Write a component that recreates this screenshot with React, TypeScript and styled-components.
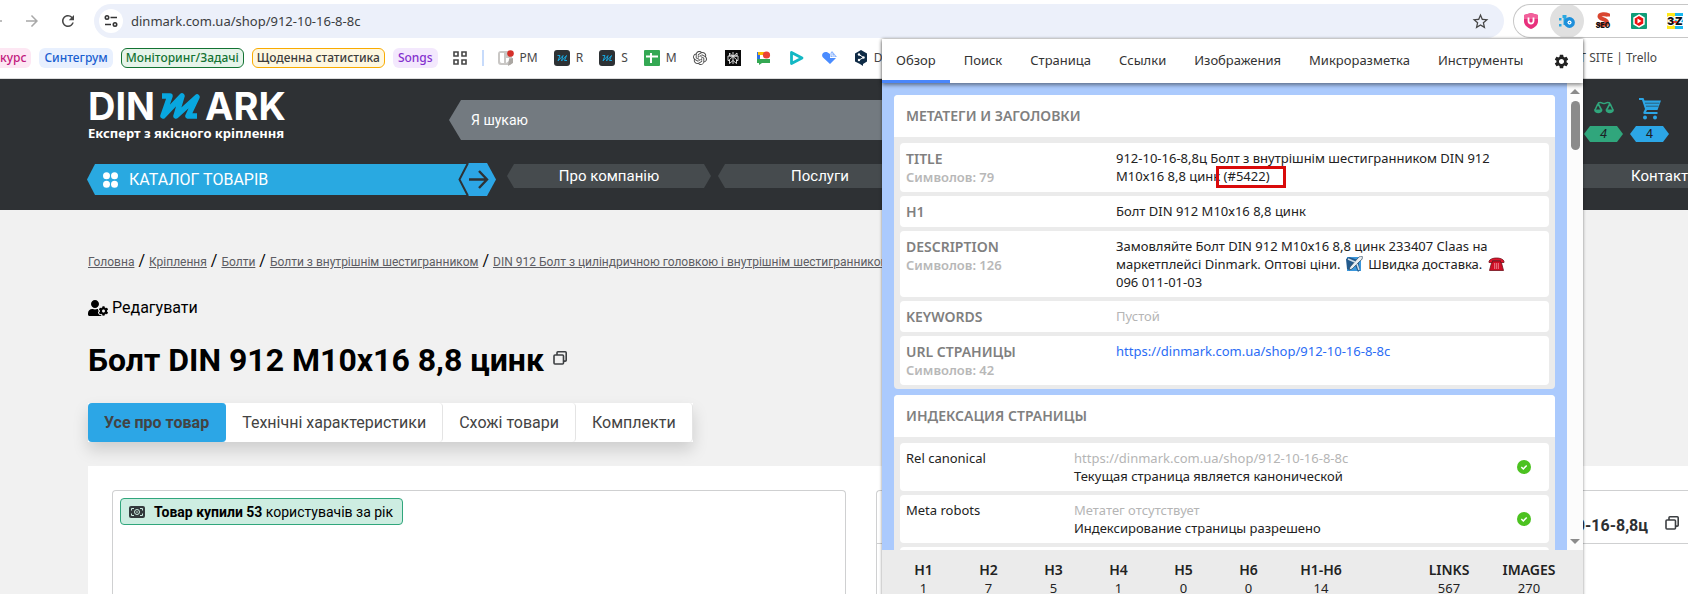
import React from 'react';
import styled, { createGlobalStyle, css } from 'styled-components';
import { MdArrowBack, MdArrowForward, MdRefresh, MdSettings, MdStarBorder } from 'react-icons/md';
import { SiOpenai } from 'react-icons/si';
import { FaUserCog } from 'react-icons/fa';

const ui = '"Noto Sans", "Open Sans", sans-serif';
const site = 'Roboto, "Liberation Sans", sans-serif';
const dark = '#2e3134';
const blue = '#2ca6e6';

const GlobalStyle = createGlobalStyle`
  *, *::before, *::after { box-sizing: border-box; }
  body { margin: 0; background: #f1f1f1; }
  button, input { font: inherit; color: inherit; border: 0; padding: 0; margin: 0; background: none; }
  h1, h2, p, dl, dt, dd, ol, ul { margin: 0; padding: 0; font-weight: inherit; list-style: none; }
  a { color: inherit; text-decoration: none; }
  svg { display: block; flex: none; }
`;

const Page = styled.div`
  position: relative;
  display: flex;
  flex-direction: column;
  min-height: 100vh;
  overflow: hidden;
  font-family: ${site};
  color: #000;
`;

/* ---------- browser chrome ---------- */

const Toolbar = styled.div`
  display: flex;
  align-items: center;
  height: 38px;
  padding-top: 4px;
  background: #fff;
  font-family: ${ui};
`;

const NavButtons = styled.div`
  display: flex;
  margin: 0 8px 0 -22px;
`;

const NavButton = styled.button<{ $muted?: boolean }>`
  display: grid;
  place-items: center;
  width: 36px;
  height: 34px;
  color: ${(p) => (p.$muted ? '#a8a8a8' : '#474747')};
`;

const Omnibox = styled.div`
  display: flex;
  flex: 1;
  align-items: center;
  gap: 8px;
  height: 34px;
  padding: 0 5px;
  border-radius: 17px;
  background: #ecf0fa;
`;

const SiteInfo = styled.button`
  display: grid;
  place-items: center;
  width: 24px;
  height: 24px;
  border-radius: 50%;
  background: #fff;
`;

const Address = styled.input`
  flex: 1;
  min-width: 0;
  font-size: 13px;
  color: #3a3c40;
  outline: none;
`;

const StarButton = styled.button`
  width: 24px;
  height: 24px;
  display: grid;
  place-items: center;
  margin-right: 7px;
  color: #474747;
`;

const Extensions = styled.div`
  display: flex;
  width: 175px;
  height: 34px;
  margin-left: 9px;
  border: 1px solid #c7c7c7;
  border-right: 0;
  border-radius: 17px 0 0 17px;
  overflow: hidden;
`;

const Extension = styled.button<{ $active?: boolean }>`
  display: grid;
  flex: none;
  place-items: center;
  width: 34px;
  height: 34px;
  margin: -1px 2px 0 0;
  border-radius: 50%;
  background: ${(p) => (p.$active ? '#e0e0e0' : 'none')};
`;

const Bookmarks = styled.nav`
  display: flex;
  align-items: flex-start;
  height: 41px;
  padding-top: 10px;
  overflow: hidden;
  border-bottom: 1px solid #dcdcdc;
  background: #fff;
  font: 12px/20px ${ui};
  color: #474747;
  white-space: nowrap;
`;

const Chips = styled.div`
  display: flex;
  gap: 8px;
  margin-left: -5px;
`;

const tones = {
  pink: css`background: #fde7f3; color: #c2187d;`,
  blue: css`background: #e8f0fe; color: #1a5fd0;`,
  green: css`background: #e6f4ea; color: #137333; border-color: #137333;`,
  yellow: css`background: #fef7e0; color: #3c3c3c; border-color: #f9ab00;`,
  purple: css`background: #f3e8fd; color: #8430ce;`,
};

const Chip = styled.a<{ $tone: keyof typeof tones }>`
  height: 20px;
  padding: 0 4px;
  border: 1px solid transparent;
  border-radius: 6px;
  line-height: 18px;
  font-weight: 500;
  ${(p) => tones[p.$tone]}
`;

const AppsButton = styled.button`
  display: grid;
  place-items: center;
  width: 14px;
  height: 20px;
  margin-left: 15px;
`;

const Divider = styled.span`
  width: 2px;
  height: 16px;
  margin: 2px 14px 0 15px;
  background: #c7dbfb;
`;

const BookmarkLinks = styled.div`
  display: flex;
  flex: 1;
  gap: 16px;
`;

const Bookmark = styled.a`
  display: flex;
  align-items: center;
  gap: 6px;
  min-width: 16px;
  height: 20px;
  &:last-child { margin: 0 31px 0 auto; }
`;

/* ---------- shop page ---------- */

const Header = styled.header`
  display: flex;
  flex-direction: column;
  gap: 21px;
  padding: 14px 0 15px 87px;
  background: ${dark};
  color: #fff;
`;

const HeaderTop = styled.div`
  display: flex;
  height: 50px;
`;

const Logo = styled.a`
  width: 362px;
  padding-left: 1px;
`;

const LogoWord = styled.span`
  display: flex;
  gap: 4px;
  height: 27px;
  font: 700 38px/27px Inter, "Liberation Sans", sans-serif;
`;

const Tagline = styled.span`
  display: block;
  padding-top: 4px;
  font: 700 13px/18px ${ui};
`;

const Search = styled.form`
  flex: 1;
  height: 40px;
  margin-top: 7px;
  padding: 0 22px;
  background: #737a80;
  clip-path: polygon(12px 0, calc(100% - 12px) 0, 100% 50%, calc(100% - 12px) 100%, 12px 100%, 0 50%);
`;

const SearchInput = styled.input`
  width: 100%;
  height: 40px;
  font-size: 14px;
  outline: none;
  &::placeholder { color: #fff; opacity: 1; }
`;

const Counters = styled.div`
  display: flex;
  gap: 7px;
  margin: 5px 19px 0 60px;
`;

const Counter = styled.a`
  display: flex;
  flex-direction: column;
  align-items: center;
  gap: 6px;
  width: 39px;
`;

const CounterBadge = styled.span<{ $color: string; $italic?: boolean }>`
  width: 39px;
  background: ${(p) => p.$color};
  color: #1c2226;
  clip-path: polygon(6px 0, 33px 0, 100% 50%, 33px 100%, 6px 100%, 0 50%);
  font: ${(p) => (p.$italic ? 'italic' : 'normal')} 13px/16px ${site};
  text-align: center;
`;

const HeaderNav = styled.div`
  display: flex;
  align-items: flex-start;
  gap: 11px;
`;

const Catalog = styled.button`
  position: relative;
  display: flex;
  flex: none;
  align-items: center;
  width: 409px;
  height: 31px;
  padding-left: 16px;
  color: #fff;
  font-size: 16px;
  &::before {
    content: '';
    position: absolute;
    inset: 0 20px 0 0;
    background: #29a9e1;
    clip-path: polygon(8px 0, 100% 0, 100% 100%, 8px 100%, 0 50%);
  }
`;

const CatalogLabel = styled.span`
  position: relative;
  display: flex;
  align-items: center;
  gap: 11px;
`;

const CatalogArrow = styled.span`
  position: absolute;
  right: 0;
  top: -1px;
`;

const Menu = styled.nav`
  display: flex;
  flex: 1;
  gap: 7px;
  overflow: hidden;
`;

const MenuItem = styled.a`
  flex: 0 0 204px;
  background: #464b4e;
  clip-path: polygon(7px 0, calc(100% - 7px) 0, 100% 50%, calc(100% - 7px) 100%, 7px 100%, 0 50%);
  font-size: 15px;
  line-height: 24px;
  text-align: center;
`;

const Content = styled.main`
  display: flex;
  flex: 1;
  flex-direction: column;
  align-items: flex-start;
  padding: 39px 0 0 88px;
  font-size: 16px;
  line-height: 24px;
`;

const Breadcrumbs = styled.nav`
  white-space: nowrap;
`;

const Crumb = styled.a`
  color: #5d5d63;
  font-size: 12px;
  text-decoration: underline;
`;

const EditLink = styled.a`
  display: flex;
  align-items: center;
  gap: 4px;
  margin-top: 22px;
`;

const TitleRow = styled.div`
  display: flex;
  gap: 9px;
  margin-top: 21px;
`;

const Title = styled.h1`
  font-size: 32px;
  line-height: 38px;
  font-weight: 700;
`;

const CopyButton = styled.button`
  align-self: flex-start;
  padding-top: 10px;
`;

const ProductTabs = styled.div`
  display: flex;
  margin-top: 24px;
  background: #fff;
  box-shadow: 0 8px 16px rgba(0, 0, 0, 0.15);
`;

const ProductTab = styled.button<{ $active?: boolean }>`
  height: 39px;
  padding: 0 16px;
  border-right: 1px solid #e4e4e4;
  border-radius: 4px;
  color: #434343;
  ${(p) => p.$active && css`
    background: ${blue};
    border-color: ${blue};
    font-weight: 700;
  `}
`;

const ProductCard = styled.section`
  display: grid;
  flex: 1;
  grid-template-columns: 734px 1fr;
  gap: 30px;
  align-self: stretch;
  min-height: 128px;
  margin-top: 24px;
  padding: 24px 0 0 24px;
  background: #fff;
`;

const Gallery = styled.div`
  padding: 7px;
  border: 1px solid #cfd0d1;
  border-bottom: 0;
  border-radius: 4px 4px 0 0;
`;

const SoldBadge = styled.p`
  display: flex;
  align-items: center;
  gap: 9px;
  width: fit-content;
  height: 27px;
  padding: 0 9px 0 8px;
  border: 1px solid #30a67c;
  border-radius: 4px;
  background: #cdede1;
  font-size: 14px;
`;

const Info = styled.div`
  border: 1px solid #cfd0d1;
  border-width: 1px 0 0 1px;
  border-radius: 4px 0 0 0;
`;

const Sku = styled.div`
  display: flex;
  align-items: flex-start;
  justify-content: flex-end;
  gap: 17px;
  height: 53px;
  padding: 23px 9px 0 0;
  border-bottom: 1px solid #cfd0d1;
  color: #2d3033;
  font-weight: 700;
`;

const SkuCopy = styled(CopyButton)`
  padding-top: 2px;
`;

/* ---------- extension popup ---------- */

const Popup = styled.aside`
  position: absolute;
  top: 39px;
  right: 105px;
  bottom: -16px;
  display: flex;
  flex-direction: column;
  width: 701px;
  background: #fff;
  box-shadow: 0 0 3px rgba(0, 0, 0, 0.45);
  font: 13px/18px ${ui};
  color: #222;
`;

const PopupTabs = styled.div`
  position: relative;
  z-index: 1;
  display: flex;
  height: 44px;
  background: #fff;
  box-shadow: 0 2px 4px rgba(0, 0, 0, 0.45);
`;

const PopupTab = styled.button<{ $active?: boolean }>`
  padding: 0 14px;
  border-bottom: 3px solid ${(p) => (p.$active ? '#4a86fa' : 'transparent')};
  color: #333;
`;

const SettingsButton = styled.button`
  margin: 0 13px 0 auto;
`;

const PopupBody = styled.div`
  display: flex;
  flex: 1;
  min-height: 0;
  overflow: hidden;
`;

const Sections = styled.div`
  display: flex;
  flex: 1;
  flex-direction: column;
  gap: 6px;
  padding: 12px 12px 0;
  background: #abcafd;
`;

const Section = styled.section`
  flex: none;
  border-radius: 4px;
  overflow: hidden;
  background: #ebebeb;
`;

const SectionTitle = styled.h2`
  padding-left: 12px;
  background: #fff;
  color: #808080;
  font-size: 14px;
  font-weight: 600;
  line-height: 42px;
`;

const Rows = styled.dl`
  display: flex;
  flex-direction: column;
  gap: 4px;
  padding: 6px 6px 4px;
`;

const Row = styled.div<{ $label: number }>`
  display: grid;
  grid-template-columns: ${(p) => p.$label}px 1fr auto;
  align-items: start;
  padding: 6px 18px 6px 6px;
  border-radius: 4px;
  background: #fff;
`;

const MetaName = styled.dt`
  color: #808080;
  font-size: 14px;
  font-weight: 600;
  line-height: 19px;
`;

const CharCount = styled.small`
  display: block;
  color: #b8b8b8;
  font-size: 13px;
  line-height: 18px;
`;

const MetaValue = styled.dd`
  max-width: 400px;
`;

const Faint = styled.span`
  display: block;
  color: #b5b5b5;
`;

const PageLink = styled.a`
  color: #2a6cf5;
`;

const Emoji = styled.span`
  display: inline-block;
  height: 16px;
  margin: 0 2px;
  vertical-align: -3px;
`;

const Marked = styled.span`
  position: relative;
  &::after {
    content: '';
    position: absolute;
    inset: -1px -16px -3px -8px;
    border: 3px solid #d90a0a;
  }
`;

const Status = styled.dd`
  align-self: center;
`;

const Scrollbar = styled.div`
  display: flex;
  flex-direction: column;
  align-items: center;
  width: 16px;
  padding: 6px 0;
  background: #fcfcfc;
`;

const Thumb = styled.span`
  width: 9px;
  height: 49px;
  margin: 7px 0 auto;
  border-radius: 5px;
  background: #8b8b8b;
`;

const ScrollArrow = styled.span<{ $down?: boolean }>`
  border: solid transparent;
  border-width: 0 5px;
  ${(p) => (p.$down ? 'border-top: 5px solid #8b8b8b;' : 'border-bottom: 5px solid #8b8b8b;')}
`;

const Totals = styled.dl`
  display: flex;
  height: 60px;
  padding: 11px 14px 0 9px;
  background: #ebebeb;
  text-align: center;
`;

const Total = styled.div<{ $wide?: boolean; $apart?: boolean }>`
  width: ${(p) => (p.$wide ? 80 : 65)}px;
  margin-left: ${(p) => (p.$apart ? 'auto' : 0)};
`;

const TotalName = styled.dt`
  font-size: 14px;
  font-weight: 600;
`;

/* ---------- drawings ---------- */

const SliderIcon = () => (
  <svg width="14" height="14" viewBox="0 0 14 14" fill="none" stroke="#333" strokeWidth="1.6">
    <circle cx="3" cy="3.5" r="1.7" /><path d="M6.500 3.500H13M1 10.500h6" /><circle cx="11" cy="10.500" r="1.700" />
  </svg>
);

const ShieldIcon = () => (
  <svg width="16" height="16" viewBox="0 0 16 16">
    <path d="M8 0 15 2v6c0 4-3 6.500-7 8-4-1.500-7-4-7-8V2z" fill="#e8317d" />
    <path d="M8 0 15 2v4H1V2z" fill="#f2609b" />
    <path d="M5.500 4.500v3.500a2.500 2.500 0 0 0 5 0V4.500" fill="none" stroke="#fff" strokeWidth="1.800" />
  </svg>
);

const DotBIcon = () => (
  <svg width="16" height="16" viewBox="0 0 16 16" fill="none">
    <path d="M0 5h2.500v2.500H0zM0 11h2.500v2.500H0z" fill="#2ba8e0" />
    <path d="M3.500 3.500H6V12" stroke="#2ba8e0" strokeWidth="3" />
    <circle cx="10.500" cy="9.500" r="3.600" stroke="#1d8fdb" strokeWidth="3.600" />
    <circle cx="10.500" cy="9.500" r="2" fill="#fff" /><circle cx="10.500" cy="9.500" r=".8" fill="#1d8fdb" />
  </svg>
);

const SeoIcon = () => (
  <svg width="18" height="18" viewBox="0 0 18 18">
    <path d="M14 4.500V3C12 2 5.500 1.500 5.500 4.500S13 7 13 10.500 6 13 4 12" fill="none" stroke="#d9452f" strokeWidth="4" />
    <text x="9" y="16" textAnchor="middle" fontFamily="Inter, sans-serif" fontSize="7" fontWeight="900" fill="#111">SEO</text>
  </svg>
);

const PlayIcon = () => (
  <svg width="16" height="16" viewBox="0 0 16 16">
    <rect width="16" height="16" rx="1" fill="#0f9d78" />
    <path d="M8 2l5 3v6l-5 3-5-3V5z" fill="#e11" stroke="#fff" strokeWidth="1.500" />
    <path d="M6.500 5.500v5L10.500 8z" fill="#fff" />
  </svg>
);

const TwoToneIcon = () => (
  <svg width="16" height="16" viewBox="0 0 16 16" fontFamily="Inter, sans-serif" fontSize="11" fontWeight="900">
    <path d="M0 0h8v16H0z" fill="#ffe81a" /><path d="M8 0h8v16H8z" fill="#18b8f0" />
    <g fill="#111" stroke="#fff" strokeWidth="2" paintOrder="stroke"><text x="0" y="12">3</text><text x="8" y="12">Z</text></g>
    <path d="M6 9h4" stroke="#e11" strokeWidth="1.500" />
  </svg>
);

const AppsIcon = () => (
  <svg width="14" height="14" viewBox="0 0 14 14" fill="none" stroke="#474747" strokeWidth="1.600">
    <path d="M1 1h4v4H1zM9 1h4v4H9zM1 9h4v4H1zM9 9h4v4H9z" />
  </svg>
);

const PmIcon = () => (
  <svg width="16" height="16" viewBox="0 0 16 16">
    <rect y="1" width="14" height="14" rx="3" fill="#c9c7c5" /><path d="M2 3h4v10H4c-2 0-2-1-2-3zM8 8h3v3l-3 2z" fill="#fff" />
    <path d="M11 9l4-1v5l-5 3z" fill="#aaa6a2" /><circle cx="12.500" cy="3.500" r="3.300" fill="#d5302a" />
  </svg>
);

const MIcon = () => (
  <svg width="16" height="16" viewBox="0 0 16 16">
    <rect width="16" height="16" rx="3" fill="#2d3134" />
    <path d="M3.500 5.500h2.500L4 11 9 5.500 7.500 11 12.500 5.500 10.500 10.500H13" fill="none" stroke="#18a5dc" strokeLinejoin="round" />
  </svg>
);

const SheetIcon = () => (
  <svg width="16" height="16" viewBox="0 0 16 16">
    <rect width="16" height="16" rx="1" fill="#34a853" /><path d="M7 3v10M2 6.500h12" stroke="#fff" strokeWidth="2" />
  </svg>
);

const PerplexityIcon = () => (
  <svg width="16" height="16" viewBox="0 0 16 16">
    <rect width="16" height="16" fill="#0b0b0b" />
    <path d="M8 2v12M4.500 3v3H12V3L8 6.500 4.500 3M3 6h10v4.500h-2M5 10.500H3V6M8 6.500l-3.500 3v4L8 10.500l3.500 3v-4z" fill="none" stroke="#e8e8e8" strokeWidth=".9" />
  </svg>
);

const ChatIcon = () => (
  <svg width="14" height="14" viewBox="0 0 14 14">
    <path d="M0 1h3v10H0z" fill="#2f6fe4" /><path d="M1 1h7v3H1z" fill="#fbbc04" />
    <path d="M0 8h13v4H5l-3 2v-2H0z" fill="#34a853" /><circle cx="9.500" cy="4" r="3.600" fill="#ea4335" />
  </svg>
);

const TriangleIcon = () => (
  <svg width="16" height="16" viewBox="0 0 16 16">
    <path d="M2.500 2.500v11L13 8z" fill="none" stroke="#13b8c4" strokeWidth="2.800" strokeLinejoin="round" />
  </svg>
);

const HeartIcon = () => (
  <svg width="17" height="16" viewBox="0 0 17 16">
    <path d="M9 14 2 7.500C-1 4 4-1 9 4v4h6z" fill="#4a8cff" /><path d="M9.500 3 11 1l5 6H9.500z" fill="#8db6ff" />
    <path d="M11 3v3h3" fill="none" stroke="#fff" strokeWidth=".8" />
  </svg>
);

const DeeplIcon = () => (
  <svg width="14" height="16" viewBox="0 0 14 16">
    <path d="M7 0 13 3.500v8L9 14v2l-3-2L1 11.500v-8z" fill="#0f2b46" />
    <path d="M5 4.500 9.500 7.500 5 10" stroke="#fff" fill="none" /><circle cx="5" cy="4.500" r="1.200" fill="#fff" />
    <circle cx="9.500" cy="7.500" r="1.200" fill="#fff" /><circle cx="5" cy="10" r="1.200" fill="#fff" />
  </svg>
);

const LogoM = () => (
  <svg width="42" height="27" viewBox="0 0 42 27">
    <path d="M3 3H11L4 23 23 3 17 23 38 4 29 23H38" fill="none" stroke="#08a7df" strokeWidth="5.500" strokeLinejoin="round" />
  </svg>
);

const ScalesIcon = () => (
  <svg width="22" height="22" viewBox="0 0 22 22" fill="none" stroke="#30a67c" strokeWidth="1.600">
    <path d="M5 5C9 3.500 8 5.500 11 5.500S13 3.500 17 5M5 5.500 2 12M5 5.500 8.500 12M17 5.500 13.500 12M17 5.500 20 12" />
    <path d="M1 11.500h8.500c0 5-8.500 5-8.500 0zM12.500 11.500H21c0 5-8.500 5-8.500 0z" fill="#30a67c" stroke="none" />
  </svg>
);

const CartIcon = () => (
  <svg width="22" height="22" viewBox="0 0 22 22" fill={blue}>
    <path d="M0 0h4.500l1 2.500H22L18.500 12H8l-1 2h11.500v2H5.500c-1 0-1.500-1-1-2l1.500-3L3 2H0z" />
    <path d="M6 5.200h14.500M7 8.200h12.500" stroke={dark} strokeWidth=".6" />
    <circle cx="6" cy="19.500" r="2" /><circle cx="16" cy="19.500" r="2" />
  </svg>
);

const DotsIcon = () => (
  <svg width="15" height="16" viewBox="0 0 15 16" fill="#fff">
    <circle cx="3.500" cy="3.800" r="3.500" /><circle cx="11.500" cy="3.800" r="3.500" />
    <circle cx="3.500" cy="12.200" r="3.500" /><circle cx="11.500" cy="12.200" r="3.500" />
  </svg>
);

const ArrowHexIcon = () => (
  <svg width="38" height="33" viewBox="0 0 38 33">
    <path d="M10 0h19l9 16.500L29 33H10L1 16.500z" fill={blue} />
    <path d="M10 0 1.500 16.500 10 33" fill="none" stroke={dark} strokeWidth="2" />
    <path d="M11 16.500h17M21 8l8 8.500-8 8.500" fill="none" stroke={dark} strokeWidth="2.400" />
  </svg>
);

const CopyIcon = () => (
  <svg width="14" height="14" viewBox="0 0 14 14" fill="none" stroke="#3c3f42" strokeWidth="1.600">
    <rect x="1" y="4" width="9.500" height="9" rx="1" /><path d="M4 4V1.700c0-.6.300-.9.900-.9h7.300c.6 0 1 .3 1 .9v7.500c0 .6-.4.900-1 .9h-1.700" />
  </svg>
);

const MoneyIcon = () => (
  <svg width="16" height="12" viewBox="0 0 16 12">
    <rect width="16" height="12" rx="2" fill="#33393c" />
    <path d="M2.500 4.500v-2h2.500M11 2.500h2.500v2M13.500 7.500v2H11M5 9.500H2.500v-2" fill="none" stroke="#cdede1" />
    <circle cx="8" cy="6" r="2.500" fill="none" stroke="#cdede1" /><circle cx="8" cy="6" r=".8" fill="#cdede1" />
  </svg>
);

const PlaneIcon = () => (
  <svg width="17" height="16" viewBox="0 0 17 16">
    <path d="M1 1h14v14H1z" fill="#3b97dc" /><path d="M0 3l3-2 9 3 2 10-2 2-3-7-5 5-3-1z" fill="#235a8c" />
    <path d="M16 0c1 2 0 4-2 5L6 13l-3 1 1-3 8-9c1-1 2-2 4-2z" fill="#e9eef2" stroke="#26465f" strokeWidth=".7" />
    <path d="M2 3l7 3M13 14l-2-6" stroke="#cfdde8" strokeWidth="1.500" />
  </svg>
);

const PhoneIcon = () => (
  <svg width="17" height="16" viewBox="0 0 17 16">
    <path d="M4 5h9l2.500 9.500h-14z" fill="#cf0d25" stroke="#70111c" strokeWidth=".8" />
    <path d="M1 6.500c-1-6 16-6 15 0h-3.500V4.500h-8v2z" fill="#e0152d" stroke="#70111c" strokeWidth=".8" />
    <path d="M6 8h5M6 10h5M6 12h5" stroke="#ffc4ca" strokeDasharray="1.200 .7" />
  </svg>
);

const CheckIcon = () => (
  <svg width="14" height="14" viewBox="0 0 14 14" role="img" aria-label="OK">
    <circle cx="7" cy="7" r="7" fill="#4cc220" /><path d="M4.300 7l2 2 3.400-3.600" fill="none" stroke="#fff" strokeWidth="1.500" />
  </svg>
);

/* ---------- data ---------- */

const crumbs = ['Головна', 'Кріплення', 'Болти', 'Болти з внутрішнім шестигранником',
  'DIN 912 Болт з циліндричною головкою і внутрішнім шестигранником'];
const menu = ['Про компанію', 'Послуги', 'Доставка', 'Оплата', 'Новини', 'Контакти'];
const popupTabs = ['Обзор', 'Поиск', 'Страница', 'Ссылки', 'Изображения', 'Микроразметка', 'Инструменты'];
const headings = [['H1', '1'], ['H2', '7'], ['H3', '5'], ['H4', '1'], ['H5', '0'], ['H6', '0']];

const bookmarks: [React.ReactNode, string, string][] = [
  [<PmIcon />, 'PM', 'PM'], [<MIcon />, 'R', 'R'], [<MIcon />, 'S', 'S'], [<SheetIcon />, 'M', 'M'],
  [<SiOpenai size={14} />, '', 'ChatGPT'], [<PerplexityIcon />, '', 'Perplexity'], [<ChatIcon />, '', 'Chat'],
  [<TriangleIcon />, '', 'Player'], [<HeartIcon />, '', 'Health'], [<DeeplIcon />, 'DeepL', 'DeepL'],
  [null, 'PROJECT SITE | Trello', 'Trello'],
];

export default function App() {
  return (
    <Page>
      <GlobalStyle />
      <Toolbar>
        <NavButtons>
          <NavButton $muted aria-label="Назад"><MdArrowBack size={18} /></NavButton>
          <NavButton $muted aria-label="Вперед"><MdArrowForward size={18} /></NavButton>
          <NavButton aria-label="Оновити"><MdRefresh size={18} /></NavButton>
        </NavButtons>
        <Omnibox>
          <SiteInfo aria-label="Інформація про сайт"><SliderIcon /></SiteInfo>
          <Address aria-label="Адреса" defaultValue="dinmark.com.ua/shop/912-10-16-8-8c" />
          <StarButton aria-label="Додати закладку"><MdStarBorder size={19} /></StarButton>
        </Omnibox>
        <Extensions>
          <Extension aria-label="Shield"><ShieldIcon /></Extension>
          <Extension $active aria-label="SEO overview"><DotBIcon /></Extension>
          <Extension aria-label="SEO"><SeoIcon /></Extension>
          <Extension aria-label="Video"><PlayIcon /></Extension>
          <Extension aria-label="Translate"><TwoToneIcon /></Extension>
        </Extensions>
      </Toolbar>
      <Bookmarks aria-label="Закладки">
        <Chips>
          <Chip href="#" $tone="pink">курс</Chip>
          <Chip href="#" $tone="blue">Синтегрум</Chip>
          <Chip href="#" $tone="green">Моніторинг/Задачі</Chip>
          <Chip href="#" $tone="yellow">Щоденна статистика</Chip>
          <Chip href="#" $tone="purple">Songs</Chip>
        </Chips>
        <AppsButton aria-label="Усі вкладки"><AppsIcon /></AppsButton>
        <Divider />
        <BookmarkLinks>
          {bookmarks.map(([icon, text, name]) => (
            <Bookmark key={name} href="#" aria-label={name}>{icon}{text}</Bookmark>
          ))}
        </BookmarkLinks>
      </Bookmarks>

      <Header>
        <HeaderTop>
          <Logo href="#">
            <LogoWord>DIN<LogoM />ARK</LogoWord>
            <Tagline>Експерт з якісного кріплення</Tagline>
          </Logo>
          <Search role="search">
            <SearchInput type="search" aria-label="Пошук" placeholder="Я шукаю" />
          </Search>
          <Counters>
            <Counter href="#" aria-label="Порівняння">
              <ScalesIcon /><CounterBadge $color="#30a67c" $italic>4</CounterBadge>
            </Counter>
            <Counter href="#" aria-label="Кошик">
              <CartIcon /><CounterBadge $color={blue}>4</CounterBadge>
            </Counter>
          </Counters>
        </HeaderTop>
        <HeaderNav>
          <Catalog>
            <CatalogLabel><DotsIcon />КАТАЛОГ ТОВАРІВ</CatalogLabel>
            <CatalogArrow><ArrowHexIcon /></CatalogArrow>
          </Catalog>
          <Menu>
            {menu.map((item) => <MenuItem key={item} href="#">{item}</MenuItem>)}
          </Menu>
        </HeaderNav>
      </Header>

      <Content>
        <Breadcrumbs aria-label="Навігація">
          {crumbs.map((crumb, i) => (
            <React.Fragment key={crumb}>{i > 0 && ' / '}<Crumb href="#">{crumb}</Crumb></React.Fragment>
          ))}
        </Breadcrumbs>
        <EditLink href="#"><FaUserCog size={20} />Редагувати</EditLink>
        <TitleRow>
          <Title>Болт DIN 912 М10х16 8,8 цинк</Title>
          <CopyButton aria-label="Копіювати назву"><CopyIcon /></CopyButton>
        </TitleRow>
        <ProductTabs>
          <ProductTab $active>Усе про товар</ProductTab>
          <ProductTab>Технічні характеристики</ProductTab>
          <ProductTab>Схожі товари</ProductTab>
          <ProductTab>Комплекти</ProductTab>
        </ProductTabs>
        <ProductCard>
          <Gallery>
            <SoldBadge><MoneyIcon /><span><b>Товар купили 53</b> користувачів за рік</span></SoldBadge>
          </Gallery>
          <Info>
            <Sku>912-10-16-8,8ц<SkuCopy aria-label="Копіювати артикул"><CopyIcon /></SkuCopy></Sku>
          </Info>
        </ProductCard>
      </Content>

      <Popup>
        <PopupTabs>
          {popupTabs.map((tab, i) => <PopupTab key={tab} $active={i === 0}>{tab}</PopupTab>)}
          <SettingsButton aria-label="Настройки"><MdSettings size={17} /></SettingsButton>
        </PopupTabs>
        <PopupBody>
          <Sections>
            <Section>
              <SectionTitle>МЕТАТЕГИ И ЗАГОЛОВКИ</SectionTitle>
              <Rows>
                <Row $label={210}>
                  <MetaName>TITLE<CharCount>Символов: 79</CharCount></MetaName>
                  <MetaValue>912-10-16-8,8ц Болт з внутрішнім шестигранником DIN 912 М10х16 8,8 цинк <Marked>(#5422)</Marked></MetaValue>
                </Row>
                <Row $label={210}>
                  <MetaName>H1</MetaName>
                  <MetaValue>Болт DIN 912 М10х16 8,8 цинк</MetaValue>
                </Row>
                <Row $label={210}>
                  <MetaName>DESCRIPTION<CharCount>Символов: 126</CharCount></MetaName>
                  <MetaValue>
                    Замовляйте Болт DIN 912 М10х16 8,8 цинк 233407 Claas на маркетплейсі Dinmark. Оптові ціни.{' '}
                    <Emoji><PlaneIcon /></Emoji> Швидка доставка. <Emoji><PhoneIcon /></Emoji><br />096 011-01-03
                  </MetaValue>
                </Row>
                <Row $label={210}>
                  <MetaName>KEYWORDS</MetaName>
                  <MetaValue><Faint>Пустой</Faint></MetaValue>
                </Row>
                <Row $label={210}>
                  <MetaName>URL СТРАНИЦЫ<CharCount>Символов: 42</CharCount></MetaName>
                  <MetaValue><PageLink href="#">https://dinmark.com.ua/shop/912-10-16-8-8c</PageLink></MetaValue>
                </Row>
              </Rows>
            </Section>
            <Section>
              <SectionTitle>ИНДЕКСАЦИЯ СТРАНИЦЫ</SectionTitle>
              <Rows>
                <Row $label={168}>
                  <dt>Rel canonical</dt>
                  <dd><Faint>https://dinmark.com.ua/shop/912-10-16-8-8c</Faint>Текущая страница является канонической</dd>
                  <Status><CheckIcon /></Status>
                </Row>
                <Row $label={168}>
                  <dt>Meta robots</dt>
                  <dd><Faint>Метатег отсутствует</Faint>Индексирование страницы разрешено</dd>
                  <Status><CheckIcon /></Status>
                </Row>
                <Row $label={168}>
                  <dt>X-Robots-Tag</dt>
                  <dd><Faint>Заголовок отсутствует</Faint></dd>
                </Row>
              </Rows>
            </Section>
          </Sections>
          <Scrollbar><ScrollArrow /><Thumb /><ScrollArrow $down /></Scrollbar>
        </PopupBody>
        <Totals>
          {headings.map(([name, value]) => (
            <Total key={name}><TotalName>{name}</TotalName><dd>{value}</dd></Total>
          ))}
          <Total $wide><TotalName>H1-H6</TotalName><dd>14</dd></Total>
          <Total $wide $apart><TotalName>LINKS</TotalName><dd>567</dd></Total>
          <Total $wide><TotalName>IMAGES</TotalName><dd>270</dd></Total>
        </Totals>
      </Popup>
    </Page>
  );
}
